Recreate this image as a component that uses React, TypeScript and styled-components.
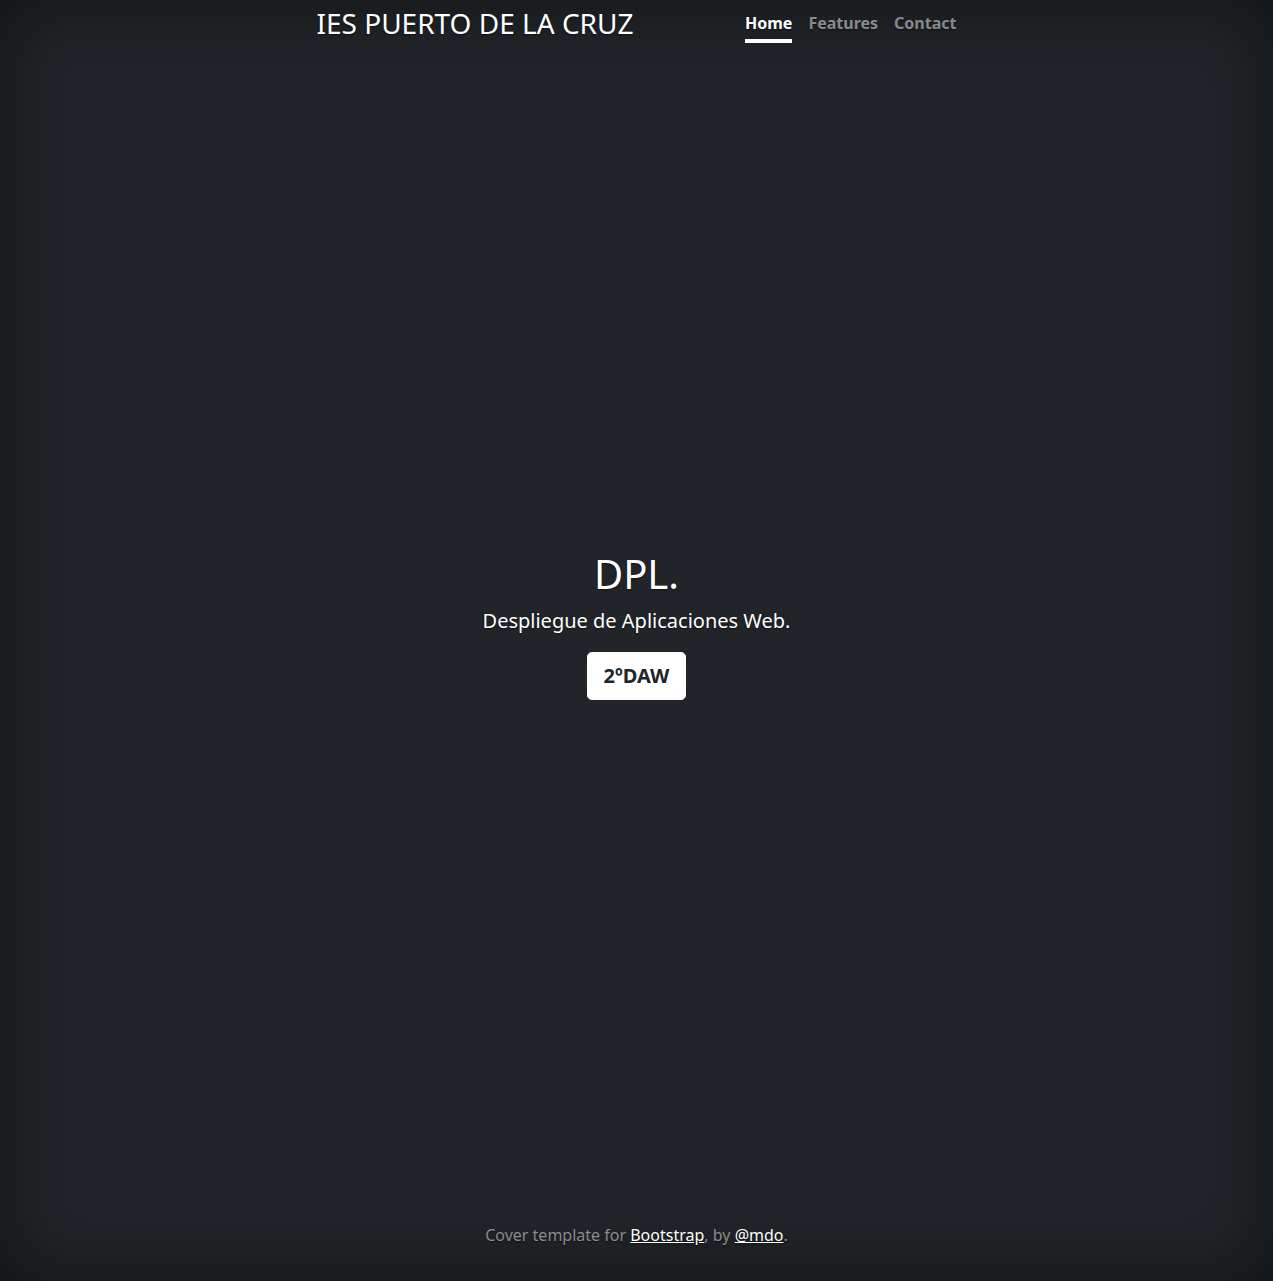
import React from "react";
import styled, { createGlobalStyle } from "styled-components";

const GlobalStyle = createGlobalStyle`
  html, body { height: 100%; }
  body {
    margin: 0;
    background-color: #212529;
    color: #fff;
    font-family: "Noto Sans", "Liberation Sans", sans-serif;
    font-size: 16px;
    line-height: 1.5;
    text-shadow: 0 .05rem .1rem rgba(0, 0, 0, .5);
    box-shadow: inset 0 0 5rem rgba(0, 0, 0, .5);
    min-height: 100vh;
  }
  #root { min-height: 100vh; display: flex; }
  * { box-sizing: border-box; }
`;

const Cover = styled.div`
  width: 100%;
  max-width: 42em;
  margin: 0 auto;
  padding: 7px 16px 18px;
  min-height: 100vh;
  display: flex;
  flex-direction: column;
  text-align: center;
`;

const Header = styled.header`
  display: flex;
  justify-content: space-between;
  align-items: flex-start;
  margin-bottom: auto;
`;

const Brand = styled.h3`
  margin: 0;
  font-size: 28px;
  font-weight: 400;
  line-height: 1.2;
`;

const Nav = styled.nav`
  display: flex;
`;

const NavLink = styled.a<{ $active?: boolean }>`
  padding: 4px 0;
  margin-left: 16px;
  font-weight: bold;
  color: ${(p) => (p.$active ? "#fff" : "rgba(255, 255, 255, .5)")};
  text-decoration: none;
  border-bottom: 4px solid ${(p) => (p.$active ? "#fff" : "transparent")};
`;

const Main = styled.main`
  padding: 0 16px;
`;

const Title = styled.h1`
  margin: 0 0 8px;
  font-size: 40px;
  font-weight: 400;
  line-height: 1.2;
`;

const Lead = styled.p`
  margin: 0 0 16px;
  font-size: 20px;
  font-weight: 400;
`;

const Button = styled.a`
  display: inline-block;
  padding: 8px 16px;
  font-size: 20px;
  line-height: 1.5;
  font-weight: 700;
  color: #212529;
  background: #fff;
  border: 1px solid #fff;
  border-radius: 4.8px;
  text-decoration: none;
  text-shadow: none;
`;

const Footer = styled.footer`
  margin-top: auto;
  color: rgba(255, 255, 255, .5);
`;

const FootText = styled.p`
  margin: 0 0 16px;
`;

const FootLink = styled.a`
  color: #fff;
  text-decoration: underline;
`;

export default function App() {
  return (
    <>
      <GlobalStyle />
      <Cover>
        <Header>
          <Brand>IES PUERTO DE LA CRUZ</Brand>
          <Nav>
            <NavLink $active href="#">Home</NavLink>
            <NavLink href="#">Features</NavLink>
            <NavLink href="#">Contact</NavLink>
          </Nav>
        </Header>
        <Main>
          <Title>DPL.</Title>
          <Lead>Despliegue de Aplicaciones Web.</Lead>
          <Lead>
            <Button href="#">2ºDAW</Button>
          </Lead>
        </Main>
        <Footer>
          <FootText>
            Cover template for <FootLink href="#">Bootstrap</FootLink>, by{" "}
            <FootLink href="#">@mdo</FootLink>.
          </FootText>
        </Footer>
      </Cover>
    </>
  );
}
